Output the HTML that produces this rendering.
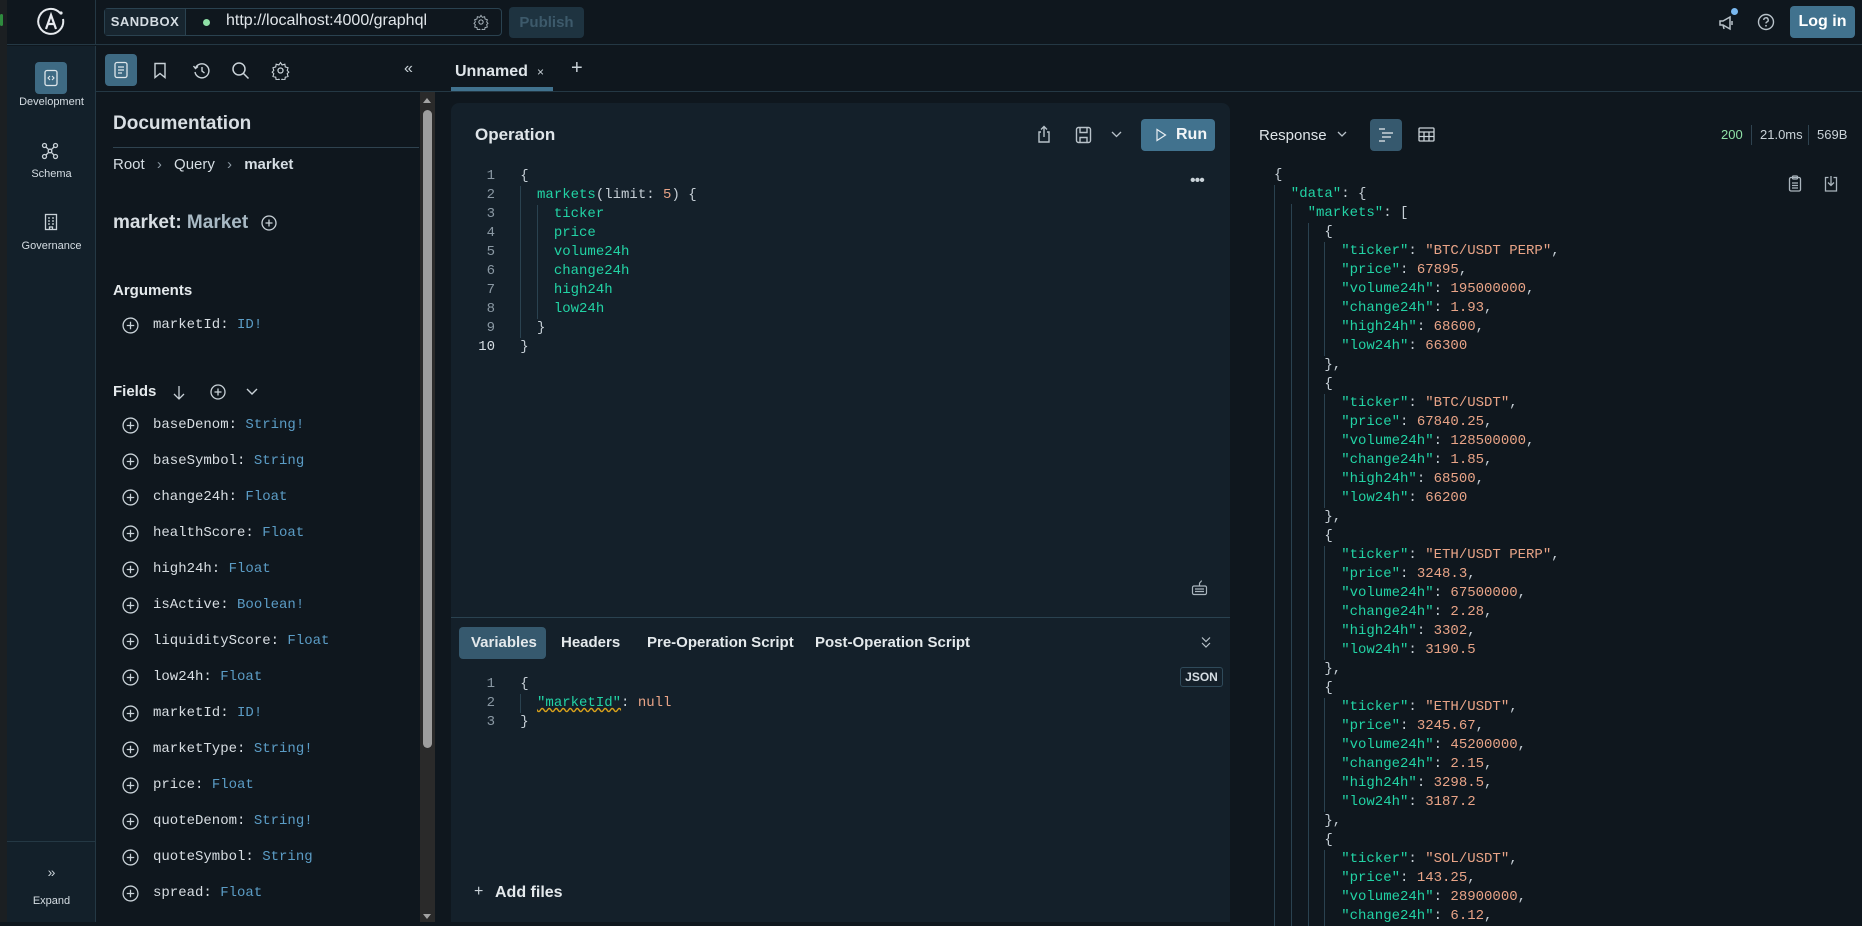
<!DOCTYPE html>
<html><head><meta charset="utf-8">
<style>
*{box-sizing:border-box;margin:0;padding:0}
body{width:1862px;height:922px;overflow:hidden;background:#0f171e;font-family:"Liberation Sans",sans-serif;color:#d5dde3;position:relative}
.a{position:absolute}
.mono{font-family:"Liberation Mono",monospace;font-size:14px}
.line{height:19px;line-height:19px;white-space:pre}
.g{display:inline-block;width:16.8px;height:19px;vertical-align:top;border-left:1px solid #2a4250}
.k{color:#22d3a5}.n{color:#e9a487}.p{color:#c5ced5}.t{color:#5b9cc5}
.ln{color:#8a98a3;text-align:right;width:30px;display:inline-block}
svg{display:block}
.row{position:absolute;left:122px;height:20px;display:flex;align-items:center}
.row .txt{margin-left:14px;font-family:"Liberation Mono",monospace;font-size:14px;color:#d8dee3}
</style></head><body>
<div class="a" style="left:0;top:0;width:7px;height:922px;background:#1b1f22"></div>
<div class="a" style="left:0;top:14px;width:3px;height:12px;background:#2e8b3e;border-radius:2px"></div>
<div class="a" style="left:7px;top:0;width:1855px;height:45px;border-bottom:1px solid #243844"></div>
<div class="a" style="left:95px;top:0;width:1px;height:45px;background:#243844"></div>
<svg class="a" style="left:36px;top:7px" width="30" height="30" viewBox="0 0 30 30"><path d="M24 6 A12.5 12.5 0 1 0 27 12" fill="none" stroke="#e6eaee" stroke-width="2"/><circle cx="25" cy="6" r="1.6" fill="#e6eaee"/><path d="M10 22 L15 8 L20 22 M12 17 H18" fill="none" stroke="#e6eaee" stroke-width="2.2"/></svg>
<div class="a" style="left:104px;top:8px;width:398px;height:28px;border:1px solid #2a4250;border-radius:4px;background:#0f171e"></div>
<div class="a" style="left:105px;top:9px;width:81px;height:26px;background:#17252f;border-right:1px solid #2a4250;font-size:13px;font-weight:bold;color:#d5dde3;line-height:26px;text-align:center;letter-spacing:.5px">SANDBOX</div>
<div class="a" style="left:203px;top:19px;width:7px;height:7px;border-radius:50%;background:#8fe0a6"></div>
<div class="a" style="left:226px;top:12px;font-size:16px;color:#e1e6ea">http://localhost:4000/graphql</div>
<svg class="a" style="left:473px;top:14px" width="16" height="16" viewBox="0 0 24 24"><circle cx="12" cy="12" r="3.2" fill="none" stroke="#aab5bd" stroke-width="1.6"/><path d="M12 2l2 3 3.5-1 .5 3.5 3.5 1-1 3.5 2 2-2 2 1 3.5-3.5 1-.5 3.5-3.5-1-2 3-2-3-3.5 1-.5-3.5-3.5-1 1-3.5-2-2 2-2-1-3.5 3.5-1 .5-3.5 3.5 1z" fill="none" stroke="#aab5bd" stroke-width="1.4"/></svg>
<div class="a" style="left:509px;top:7px;width:75px;height:31px;border-radius:4px;background:#1e3340;color:#3d5a6b;font-size:15px;font-weight:bold;text-align:center;line-height:31px">Publish</div>
<svg class="a" style="left:1717px;top:14px" width="20" height="18" viewBox="0 0 20 18"><path d="M3 7h3l7-4v12l-7-4H3z M6 11l1 4" fill="none" stroke="#b8c2c9" stroke-width="1.5"/><path d="M15 7v4" stroke="#b8c2c9" stroke-width="1.5"/></svg>
<div class="a" style="left:1731px;top:8px;width:7px;height:7px;border-radius:50%;background:#7ab8ef"></div>
<svg class="a" style="left:1757px;top:13px" width="18" height="18" viewBox="0 0 18 18"><circle cx="9" cy="9" r="7.5" fill="none" stroke="#b8c2c9" stroke-width="1.4"/><path d="M6.8 7a2.2 2.2 0 1 1 3 2c-.6.3-.8.7-.8 1.4" fill="none" stroke="#b8c2c9" stroke-width="1.4"/><circle cx="9" cy="12.8" r=".9" fill="#b8c2c9"/></svg>
<div class="a" style="left:1790px;top:6px;width:65px;height:32px;border-radius:4px;background:#41728e;color:#fff;font-size:16px;font-weight:bold;text-align:center;line-height:32px">Log in</div>

<div class="a" style="left:7px;top:46px;width:89px;height:876px;background:#13202a;border-right:1px solid #243844"></div>
<div class="a" style="left:35px;top:62px;width:32px;height:32px;border-radius:4px;background:#3e6a83"></div>
<svg class="a" style="left:43px;top:69px" width="16" height="18" viewBox="0 0 16 18"><rect x="2" y="1.5" width="12" height="15" rx="2" fill="none" stroke="#dfe6ea" stroke-width="1.3"/><path d="M7 7l-2 2 2 2M9 7l2 2-2 2" fill="none" stroke="#dfe6ea" stroke-width="1.1"/></svg>
<div class="a" style="left:7px;top:96px;width:89px;text-align:center;font-size:11px;color:#d5dde3">Development</div>
<svg class="a" style="left:41px;top:142px" width="18" height="18" viewBox="0 0 18 18" fill="none" stroke="#c9d2d8" stroke-width="1.3"><circle cx="3.5" cy="3.5" r="2"/><circle cx="14.5" cy="3.5" r="2"/><circle cx="3.5" cy="14.5" r="2"/><circle cx="14.5" cy="14.5" r="2"/><circle cx="9" cy="9" r="1.8"/><path d="M5 5l2.6 2.6M13 5l-2.6 2.6M5 13l2.6-2.6M13 13l-2.6-2.6"/></svg>
<div class="a" style="left:7px;top:168px;width:89px;text-align:center;font-size:11px;color:#d5dde3">Schema</div>
<svg class="a" style="left:43px;top:213px" width="16" height="18" viewBox="0 0 16 18" fill="none" stroke="#c9d2d8" stroke-width="1.3"><rect x="2.5" y="1.5" width="11" height="15"/><path d="M5 5h2M9 5h2M5 8h2M9 8h2M5 11h2M9 11h2M6.5 16.5v-2.5h3v2.5"/></svg>
<div class="a" style="left:7px;top:240px;width:89px;text-align:center;font-size:11px;color:#d5dde3">Governance</div>
<div class="a" style="left:7px;top:841px;width:89px;height:1px;background:#243844"></div>
<div class="a" style="left:7px;top:864px;width:89px;text-align:center;font-size:14px;color:#c9d2d8">&#187;</div>
<div class="a" style="left:7px;top:895px;width:89px;text-align:center;font-size:11px;color:#d5dde3">Expand</div>

<div class="a" style="left:105px;top:54px;width:32px;height:32px;border-radius:4px;background:#3e6a83"></div>
<svg class="a" style="left:113px;top:61px" width="16" height="18" viewBox="0 0 16 18" fill="none" stroke="#dfe6ea" stroke-width="1.3"><rect x="2" y="1.5" width="12" height="15" rx="2"/><path d="M5 6h6M5 9h6M5 12h4"/></svg>
<svg class="a" style="left:153px;top:62px" width="14" height="17" viewBox="0 0 14 17" fill="none" stroke="#c9d2d8" stroke-width="1.4"><path d="M2 1.5h10v14l-5-4-5 4z"/></svg>
<svg class="a" style="left:192px;top:61px" width="19" height="19" viewBox="0 0 19 19" fill="none" stroke="#c9d2d8" stroke-width="1.4"><path d="M3.5 7A7 7 0 1 1 3 11"/><path d="M1.5 5l2 2.5 2.5-2"/><path d="M10 6v4l2.5 2"/></svg>
<svg class="a" style="left:231px;top:61px" width="19" height="19" viewBox="0 0 19 19" fill="none" stroke="#c9d2d8" stroke-width="1.5"><circle cx="8" cy="8" r="6"/><path d="M12.5 12.5l5 5"/></svg>
<svg class="a" style="left:271px;top:61px" width="19" height="19" viewBox="0 0 24 24"><circle cx="12" cy="12" r="3.2" fill="none" stroke="#c9d2d8" stroke-width="1.6"/><path d="M12 2l2 3 3.5-1 .5 3.5 3.5 1-1 3.5 2 2-2 2 1 3.5-3.5 1-.5 3.5-3.5-1-2 3-2-3-3.5 1-.5-3.5-3.5-1 1-3.5-2-2 2-2-1-3.5 3.5-1 .5-3.5 3.5 1z" fill="none" stroke="#c9d2d8" stroke-width="1.4"/></svg>
<div class="a" style="left:404px;top:60px;font-size:16px;color:#c9d2d8">&#171;</div>
<div class="a" style="left:96px;top:91px;width:1766px;height:1px;background:#243844"></div>

<div class="a" style="left:113px;top:113px;font-size:19px;font-weight:bold;color:#d8dee3">Documentation</div>
<div class="a" style="left:113px;top:147px;width:306px;height:1px;background:#2f4350"></div>
<div class="a" style="left:113px;top:156px;font-size:15px;color:#d5dde3">Root <span style="color:#8d9aa4;margin:0 8px">&#8250;</span> Query <span style="color:#8d9aa4;margin:0 8px">&#8250;</span> <b>market</b></div>
<div class="a" style="left:113px;top:212px;font-size:19px;font-weight:bold;color:#d8dee3">market: <span style="color:#a8b9c4">Market</span></div>
<svg class="a" style="left:261px;top:215px" width="16" height="16" viewBox="0 0 16 16" fill="none" stroke="#c9d2d8" stroke-width="1.3"><circle cx="8" cy="8" r="7"/><path d="M8 4.5v7M4.5 8h7"/></svg>
<div class="a" style="left:113px;top:282px;font-size:15px;font-weight:bold;color:#e4e9ec">Arguments</div>
<div class="a" style="left:113px;top:383px;font-size:15px;font-weight:bold;color:#e4e9ec">Fields</div>
<svg class="a" style="left:172px;top:385px" width="14" height="16" viewBox="0 0 14 16" fill="none" stroke="#c9d2d8" stroke-width="1.3"><path d="M7 1v13M2 9l5 5 5-5"/></svg>
<svg class="a" style="left:210px;top:384px" width="16" height="16" viewBox="0 0 16 16" fill="none" stroke="#c9d2d8" stroke-width="1.3"><circle cx="8" cy="8" r="7"/><path d="M8 4.5v7M4.5 8h7"/></svg>
<svg class="a" style="left:246px;top:388px" width="12" height="8" viewBox="0 0 12 8" fill="none" stroke="#c9d2d8" stroke-width="1.4"><path d="M1 1l5 5 5-5"/></svg>

<div class="row" style="top:315px"><svg width="17" height="17" viewBox="0 0 16 16" fill="none" stroke="#c9d2d8" stroke-width="1.2"><circle cx="8" cy="8" r="7"/><path d="M8 4.5v7M4.5 8h7"/></svg><span class="txt">marketId: <span class="t">ID!</span></span></div>
<div class="row" style="top:415px"><svg width="17" height="17" viewBox="0 0 16 16" fill="none" stroke="#c9d2d8" stroke-width="1.2"><circle cx="8" cy="8" r="7"/><path d="M8 4.5v7M4.5 8h7"/></svg><span class="txt">baseDenom: <span class="t">String!</span></span></div>
<div class="row" style="top:451px"><svg width="17" height="17" viewBox="0 0 16 16" fill="none" stroke="#c9d2d8" stroke-width="1.2"><circle cx="8" cy="8" r="7"/><path d="M8 4.5v7M4.5 8h7"/></svg><span class="txt">baseSymbol: <span class="t">String</span></span></div>
<div class="row" style="top:487px"><svg width="17" height="17" viewBox="0 0 16 16" fill="none" stroke="#c9d2d8" stroke-width="1.2"><circle cx="8" cy="8" r="7"/><path d="M8 4.5v7M4.5 8h7"/></svg><span class="txt">change24h: <span class="t">Float</span></span></div>
<div class="row" style="top:523px"><svg width="17" height="17" viewBox="0 0 16 16" fill="none" stroke="#c9d2d8" stroke-width="1.2"><circle cx="8" cy="8" r="7"/><path d="M8 4.5v7M4.5 8h7"/></svg><span class="txt">healthScore: <span class="t">Float</span></span></div>
<div class="row" style="top:559px"><svg width="17" height="17" viewBox="0 0 16 16" fill="none" stroke="#c9d2d8" stroke-width="1.2"><circle cx="8" cy="8" r="7"/><path d="M8 4.5v7M4.5 8h7"/></svg><span class="txt">high24h: <span class="t">Float</span></span></div>
<div class="row" style="top:595px"><svg width="17" height="17" viewBox="0 0 16 16" fill="none" stroke="#c9d2d8" stroke-width="1.2"><circle cx="8" cy="8" r="7"/><path d="M8 4.5v7M4.5 8h7"/></svg><span class="txt">isActive: <span class="t">Boolean!</span></span></div>
<div class="row" style="top:631px"><svg width="17" height="17" viewBox="0 0 16 16" fill="none" stroke="#c9d2d8" stroke-width="1.2"><circle cx="8" cy="8" r="7"/><path d="M8 4.5v7M4.5 8h7"/></svg><span class="txt">liquidityScore: <span class="t">Float</span></span></div>
<div class="row" style="top:667px"><svg width="17" height="17" viewBox="0 0 16 16" fill="none" stroke="#c9d2d8" stroke-width="1.2"><circle cx="8" cy="8" r="7"/><path d="M8 4.5v7M4.5 8h7"/></svg><span class="txt">low24h: <span class="t">Float</span></span></div>
<div class="row" style="top:703px"><svg width="17" height="17" viewBox="0 0 16 16" fill="none" stroke="#c9d2d8" stroke-width="1.2"><circle cx="8" cy="8" r="7"/><path d="M8 4.5v7M4.5 8h7"/></svg><span class="txt">marketId: <span class="t">ID!</span></span></div>
<div class="row" style="top:739px"><svg width="17" height="17" viewBox="0 0 16 16" fill="none" stroke="#c9d2d8" stroke-width="1.2"><circle cx="8" cy="8" r="7"/><path d="M8 4.5v7M4.5 8h7"/></svg><span class="txt">marketType: <span class="t">String!</span></span></div>
<div class="row" style="top:775px"><svg width="17" height="17" viewBox="0 0 16 16" fill="none" stroke="#c9d2d8" stroke-width="1.2"><circle cx="8" cy="8" r="7"/><path d="M8 4.5v7M4.5 8h7"/></svg><span class="txt">price: <span class="t">Float</span></span></div>
<div class="row" style="top:811px"><svg width="17" height="17" viewBox="0 0 16 16" fill="none" stroke="#c9d2d8" stroke-width="1.2"><circle cx="8" cy="8" r="7"/><path d="M8 4.5v7M4.5 8h7"/></svg><span class="txt">quoteDenom: <span class="t">String!</span></span></div>
<div class="row" style="top:847px"><svg width="17" height="17" viewBox="0 0 16 16" fill="none" stroke="#c9d2d8" stroke-width="1.2"><circle cx="8" cy="8" r="7"/><path d="M8 4.5v7M4.5 8h7"/></svg><span class="txt">quoteSymbol: <span class="t">String</span></span></div>
<div class="row" style="top:883px"><svg width="17" height="17" viewBox="0 0 16 16" fill="none" stroke="#c9d2d8" stroke-width="1.2"><circle cx="8" cy="8" r="7"/><path d="M8 4.5v7M4.5 8h7"/></svg><span class="txt">spread: <span class="t">Float</span></span></div>

<div class="a" style="left:420px;top:92px;width:15px;height:830px;background:#2a2a2a"></div>
<div class="a" style="left:423px;top:98px;width:0;height:0;border-left:4.5px solid transparent;border-right:4.5px solid transparent;border-bottom:5px solid #a3a3a3"></div>
<div class="a" style="left:423px;top:110px;width:9px;height:638px;border-radius:5px;background:#9d9d9d"></div>
<div class="a" style="left:423px;top:914px;width:0;height:0;border-left:4.5px solid transparent;border-right:4.5px solid transparent;border-top:5px solid #a3a3a3"></div>

<div class="a" style="left:455px;top:63px;font-size:16px;font-weight:bold;color:#dfe5e9">Unnamed</div>
<div class="a" style="left:537px;top:65px;font-size:12px;color:#c9d2d8">&#215;</div>
<div class="a" style="left:571px;top:57px;font-size:20px;color:#c9d2d8">+</div>
<div class="a" style="left:451px;top:87px;width:102px;height:4px;background:#41728e"></div>

<div class="a" style="left:451px;top:103px;width:779px;height:819px;background:#14202a;border-radius:8px 8px 0 0"></div>
<div class="a" style="left:475px;top:125px;font-size:17px;font-weight:bold;color:#dfe5e9">Operation</div>
<svg class="a" style="left:1036px;top:125px" width="16" height="19" viewBox="0 0 16 19" fill="none" stroke="#b8c2c9" stroke-width="1.4"><path d="M5 7H3v10h10V7h-2M8 12V1.5M5 4.5l3-3 3 3"/></svg>
<svg class="a" style="left:1075px;top:126px" width="17" height="18" viewBox="0 0 17 18" fill="none" stroke="#b8c2c9" stroke-width="1.4"><rect x="1.5" y="1.5" width="14" height="15" rx="2"/><path d="M5 1.5v5h7v-5M5 16.5v-5h7v5"/></svg>
<svg class="a" style="left:1111px;top:131px" width="11" height="7" viewBox="0 0 11 7" fill="none" stroke="#b8c2c9" stroke-width="1.3"><path d="M1 1l4.5 4.5L10 1"/></svg>
<div class="a" style="left:1141px;top:119px;width:74px;height:32px;border-radius:4px;background:#41728e"></div>
<svg class="a" style="left:1155px;top:128px" width="12" height="14" viewBox="0 0 12 14" fill="none" stroke="#e8eef2" stroke-width="1.2"><path d="M2 1.5v11l8.5-5.5z"/></svg>
<div class="a" style="left:1176px;top:126px;font-size:16px;font-weight:bold;color:#f2f5f7">Run</div>
<div class="a" style="left:1190px;top:172px;font-size:16px;color:#c9d2d8;letter-spacing:-1px">&#8226;&#8226;&#8226;</div>

<div class="a mono" style="left:465px;top:167px">
<div class="line"><span class="ln">1</span>   <span class="p">{</span></div>
<div class="line"><span class="ln">2</span>   <i class="g"></i><span class="k">markets</span><span class="p">(limit: </span><span class="n">5</span><span class="p">) {</span></div>
<div class="line"><span class="ln">3</span>   <i class="g"></i><i class="g"></i><span class="k">ticker</span></div>
<div class="line"><span class="ln">4</span>   <i class="g"></i><i class="g"></i><span class="k">price</span></div>
<div class="line"><span class="ln">5</span>   <i class="g"></i><i class="g"></i><span class="k">volume24h</span></div>
<div class="line"><span class="ln">6</span>   <i class="g"></i><i class="g"></i><span class="k">change24h</span></div>
<div class="line"><span class="ln">7</span>   <i class="g"></i><i class="g"></i><span class="k">high24h</span></div>
<div class="line"><span class="ln">8</span>   <i class="g"></i><i class="g"></i><span class="k">low24h</span></div>
<div class="line"><span class="ln">9</span>   <i class="g"></i><span class="p">}</span></div>
<div class="line"><span class="ln" style="color:#d5dde3">10</span>   <span class="p">}</span></div>
</div>
<svg class="a" style="left:1191px;top:580px" width="17" height="16" viewBox="0 0 17 16" fill="none" stroke="#aab5bd" stroke-width="1.2"><rect x="1.5" y="6" width="14" height="8.5" rx="1.5"/><path d="M8.5 6V3.5c0-1.5 2-1.5 2-3M4 9h9M4 11.5h9"/></svg>
<div class="a" style="left:451px;top:617px;width:779px;height:1px;background:#2a4250"></div>
<div class="a" style="left:459px;top:627px;width:87px;height:32px;border-radius:4px;background:#36596e"></div>
<div class="a" style="left:471px;top:634px;font-size:15px;font-weight:bold;color:#e4e9ec">Variables</div>
<div class="a" style="left:561px;top:634px;font-size:15px;font-weight:bold;color:#e4e9ec">Headers</div>
<div class="a" style="left:647px;top:634px;font-size:15px;font-weight:bold;color:#e4e9ec">Pre-Operation Script</div>
<div class="a" style="left:815px;top:634px;font-size:15px;font-weight:bold;color:#e4e9ec">Post-Operation Script</div>
<svg class="a" style="left:1201px;top:636px" width="10" height="13" viewBox="0 0 10 13" fill="none" stroke="#b8c2c9" stroke-width="1.2"><path d="M1 1.5l4 4 4-4M1 7l4 4 4-4"/></svg>
<div class="a" style="left:1180px;top:667px;width:43px;height:20px;border:1px solid #2f4a5a;border-radius:3px;font-size:12px;font-weight:bold;color:#d5dde3;text-align:center;line-height:18px">JSON</div>
<div class="a mono" style="left:465px;top:675px">
<div class="line"><span class="ln">1</span>   <span class="p">{</span></div>
<div class="line"><span class="ln">2</span>   <i class="g"></i><span class="k" style="text-decoration:underline wavy #d9a21b">"marketId"</span><span class="p">: </span><span class="n">null</span></div>
<div class="line"><span class="ln">3</span>   <span class="p">}</span></div>
</div>
<div class="a" style="left:474px;top:883px;font-size:16px;color:#c9d2d8">+</div>
<div class="a" style="left:495px;top:884px;font-size:16px;font-weight:bold;color:#e4e9ec">Add files</div>

<div class="a" style="left:1259px;top:127px;font-size:15px;color:#dfe5e9">Response</div>
<svg class="a" style="left:1337px;top:131px" width="10" height="7" viewBox="0 0 10 7" fill="none" stroke="#b8c2c9" stroke-width="1.3"><path d="M1 1l4 4 4-4"/></svg>
<div class="a" style="left:1370px;top:119px;width:32px;height:32px;border-radius:4px;background:#36596e"></div>
<svg class="a" style="left:1377px;top:126px" width="18" height="18" viewBox="0 0 18 18" fill="none" stroke="#c9d2d8" stroke-width="1.4"><path d="M2 3h6M5 7h11M5 11h9M2 15h6"/></svg>
<svg class="a" style="left:1418px;top:127px" width="17" height="15" viewBox="0 0 17 15" fill="none" stroke="#c9d2d8" stroke-width="1.3"><rect x="1" y="1" width="15" height="13" rx="1"/><path d="M1 5h15M1 9.5h15M6 5v9M11 5v9"/></svg>
<div class="a" style="left:1721px;top:127px;font-size:13px;color:#8fe0a6">200</div>
<div class="a" style="left:1751px;top:125px;width:1px;height:20px;background:#2f4350"></div>
<div class="a" style="left:1760px;top:127px;font-size:13px;color:#c9d2d8">21.0ms</div>
<div class="a" style="left:1808px;top:125px;width:1px;height:20px;background:#2f4350"></div>
<div class="a" style="left:1817px;top:127px;font-size:13px;color:#c9d2d8">569B</div>
<svg class="a" style="left:1788px;top:175px" width="14" height="17" viewBox="0 0 14 17" fill="none" stroke="#aab5bd" stroke-width="1.3"><rect x="1.5" y="2.5" width="11" height="13.5" rx="1.5"/><rect x="4.5" y="1" width="5" height="3" rx="1"/><path d="M4 8h6M4 10.5h6M4 13h6"/></svg>
<svg class="a" style="left:1824px;top:175px" width="14" height="17" viewBox="0 0 14 17" fill="none" stroke="#aab5bd" stroke-width="1.3"><path d="M4.5 2.5h-3v13.5h11V2.5h-3"/><path d="M7 1v9M4 7.5l3 3 3-3"/></svg>

<div class="a mono" style="left:1274px;top:166px">
<div class="line"><span class="p">{</span></div>
<div class="line"><i class="g"></i><span class="k">"data"</span><span class="p">: {</span></div>
<div class="line"><i class="g"></i><i class="g"></i><span class="k">"markets"</span><span class="p">: [</span></div>
<div class="line"><i class="g"></i><i class="g"></i><i class="g"></i><span class="p">{</span></div>
<div class="line"><i class="g"></i><i class="g"></i><i class="g"></i><i class="g"></i><span class="k">"ticker"</span><span class="p">: </span><span class="n">"BTC/USDT PERP"</span><span class="p">,</span></div>
<div class="line"><i class="g"></i><i class="g"></i><i class="g"></i><i class="g"></i><span class="k">"price"</span><span class="p">: </span><span class="n">67895</span><span class="p">,</span></div>
<div class="line"><i class="g"></i><i class="g"></i><i class="g"></i><i class="g"></i><span class="k">"volume24h"</span><span class="p">: </span><span class="n">195000000</span><span class="p">,</span></div>
<div class="line"><i class="g"></i><i class="g"></i><i class="g"></i><i class="g"></i><span class="k">"change24h"</span><span class="p">: </span><span class="n">1.93</span><span class="p">,</span></div>
<div class="line"><i class="g"></i><i class="g"></i><i class="g"></i><i class="g"></i><span class="k">"high24h"</span><span class="p">: </span><span class="n">68600</span><span class="p">,</span></div>
<div class="line"><i class="g"></i><i class="g"></i><i class="g"></i><i class="g"></i><span class="k">"low24h"</span><span class="p">: </span><span class="n">66300</span></div>
<div class="line"><i class="g"></i><i class="g"></i><i class="g"></i><span class="p">},</span></div>
<div class="line"><i class="g"></i><i class="g"></i><i class="g"></i><span class="p">{</span></div>
<div class="line"><i class="g"></i><i class="g"></i><i class="g"></i><i class="g"></i><span class="k">"ticker"</span><span class="p">: </span><span class="n">"BTC/USDT"</span><span class="p">,</span></div>
<div class="line"><i class="g"></i><i class="g"></i><i class="g"></i><i class="g"></i><span class="k">"price"</span><span class="p">: </span><span class="n">67840.25</span><span class="p">,</span></div>
<div class="line"><i class="g"></i><i class="g"></i><i class="g"></i><i class="g"></i><span class="k">"volume24h"</span><span class="p">: </span><span class="n">128500000</span><span class="p">,</span></div>
<div class="line"><i class="g"></i><i class="g"></i><i class="g"></i><i class="g"></i><span class="k">"change24h"</span><span class="p">: </span><span class="n">1.85</span><span class="p">,</span></div>
<div class="line"><i class="g"></i><i class="g"></i><i class="g"></i><i class="g"></i><span class="k">"high24h"</span><span class="p">: </span><span class="n">68500</span><span class="p">,</span></div>
<div class="line"><i class="g"></i><i class="g"></i><i class="g"></i><i class="g"></i><span class="k">"low24h"</span><span class="p">: </span><span class="n">66200</span></div>
<div class="line"><i class="g"></i><i class="g"></i><i class="g"></i><span class="p">},</span></div>
<div class="line"><i class="g"></i><i class="g"></i><i class="g"></i><span class="p">{</span></div>
<div class="line"><i class="g"></i><i class="g"></i><i class="g"></i><i class="g"></i><span class="k">"ticker"</span><span class="p">: </span><span class="n">"ETH/USDT PERP"</span><span class="p">,</span></div>
<div class="line"><i class="g"></i><i class="g"></i><i class="g"></i><i class="g"></i><span class="k">"price"</span><span class="p">: </span><span class="n">3248.3</span><span class="p">,</span></div>
<div class="line"><i class="g"></i><i class="g"></i><i class="g"></i><i class="g"></i><span class="k">"volume24h"</span><span class="p">: </span><span class="n">67500000</span><span class="p">,</span></div>
<div class="line"><i class="g"></i><i class="g"></i><i class="g"></i><i class="g"></i><span class="k">"change24h"</span><span class="p">: </span><span class="n">2.28</span><span class="p">,</span></div>
<div class="line"><i class="g"></i><i class="g"></i><i class="g"></i><i class="g"></i><span class="k">"high24h"</span><span class="p">: </span><span class="n">3302</span><span class="p">,</span></div>
<div class="line"><i class="g"></i><i class="g"></i><i class="g"></i><i class="g"></i><span class="k">"low24h"</span><span class="p">: </span><span class="n">3190.5</span></div>
<div class="line"><i class="g"></i><i class="g"></i><i class="g"></i><span class="p">},</span></div>
<div class="line"><i class="g"></i><i class="g"></i><i class="g"></i><span class="p">{</span></div>
<div class="line"><i class="g"></i><i class="g"></i><i class="g"></i><i class="g"></i><span class="k">"ticker"</span><span class="p">: </span><span class="n">"ETH/USDT"</span><span class="p">,</span></div>
<div class="line"><i class="g"></i><i class="g"></i><i class="g"></i><i class="g"></i><span class="k">"price"</span><span class="p">: </span><span class="n">3245.67</span><span class="p">,</span></div>
<div class="line"><i class="g"></i><i class="g"></i><i class="g"></i><i class="g"></i><span class="k">"volume24h"</span><span class="p">: </span><span class="n">45200000</span><span class="p">,</span></div>
<div class="line"><i class="g"></i><i class="g"></i><i class="g"></i><i class="g"></i><span class="k">"change24h"</span><span class="p">: </span><span class="n">2.15</span><span class="p">,</span></div>
<div class="line"><i class="g"></i><i class="g"></i><i class="g"></i><i class="g"></i><span class="k">"high24h"</span><span class="p">: </span><span class="n">3298.5</span><span class="p">,</span></div>
<div class="line"><i class="g"></i><i class="g"></i><i class="g"></i><i class="g"></i><span class="k">"low24h"</span><span class="p">: </span><span class="n">3187.2</span></div>
<div class="line"><i class="g"></i><i class="g"></i><i class="g"></i><span class="p">},</span></div>
<div class="line"><i class="g"></i><i class="g"></i><i class="g"></i><span class="p">{</span></div>
<div class="line"><i class="g"></i><i class="g"></i><i class="g"></i><i class="g"></i><span class="k">"ticker"</span><span class="p">: </span><span class="n">"SOL/USDT"</span><span class="p">,</span></div>
<div class="line"><i class="g"></i><i class="g"></i><i class="g"></i><i class="g"></i><span class="k">"price"</span><span class="p">: </span><span class="n">143.25</span><span class="p">,</span></div>
<div class="line"><i class="g"></i><i class="g"></i><i class="g"></i><i class="g"></i><span class="k">"volume24h"</span><span class="p">: </span><span class="n">28900000</span><span class="p">,</span></div>
<div class="line"><i class="g"></i><i class="g"></i><i class="g"></i><i class="g"></i><span class="k">"change24h"</span><span class="p">: </span><span class="n">6.12</span><span class="p">,</span></div>
</div>
</body></html>
